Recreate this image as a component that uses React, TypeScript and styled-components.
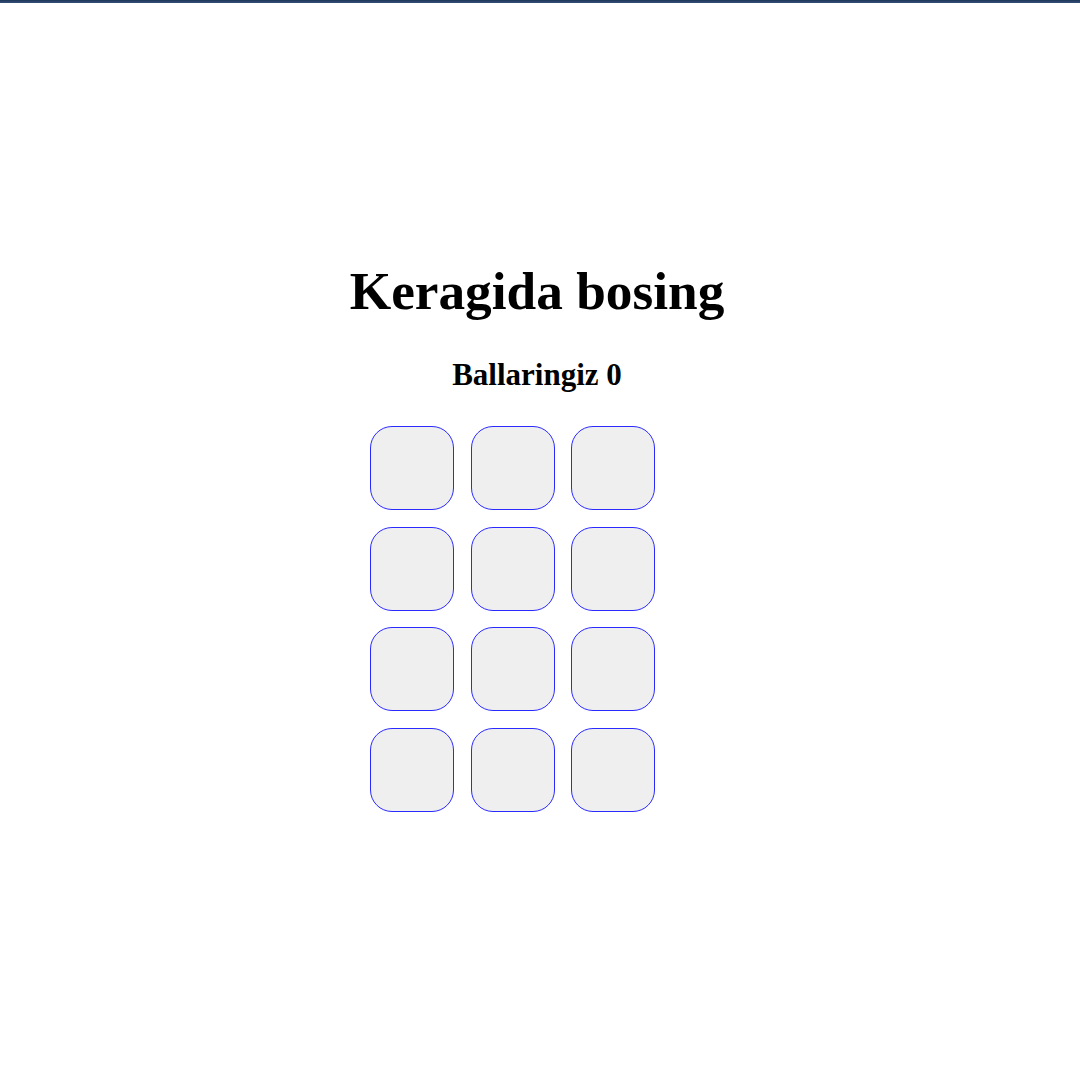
import React from "react";
import styled, { createGlobalStyle } from "styled-components";

const Global = createGlobalStyle`
  html, body { margin: 0; padding: 0; background: #ffffff; }
  body { font-family: "Liberation Serif", "Times New Roman", serif; color: #000; }
`;

const TopBar = styled.div`
  height: 3px;
  background: linear-gradient(#1d3557, #34507a);
`;

const Main = styled.main`
  display: flex;
  flex-direction: column;
  align-items: center;
  padding-top: 259px;
  padding-right: 6px;
`;

const Title = styled.h1`
  margin: 0;
  font-size: 53.3px;
  line-height: 60px;
  font-weight: 700;
`;

const Score = styled.h2`
  margin: 35px 0 0;
  font-size: 31px;
  line-height: 36px;
  font-weight: 700;
`;

const Board = styled.div`
  width: 340px;
  margin: 33px 0 0 6px;
  display: grid;
  grid-template-columns: repeat(3, 84px);
  gap: 16.5px;
`;

const Cell = styled.button`
  width: 84px;
  height: 84px;
  box-sizing: border-box;
  border: 1.5px solid #2a2aff;
  border-radius: 22px;
  background: #efefef;
  padding: 0;
  cursor: pointer;
`;

export default function App() {
  return (
    <>
      <Global />
      <TopBar />
      <Main>
        <Title>Keragida bosing</Title>
        <Score>Ballaringiz 0</Score>
        <Board>
          {Array.from({ length: 12 }).map((_, i) => (
            <Cell key={i} aria-label={`cell ${i + 1}`} />
          ))}
        </Board>
      </Main>
    </>
  );
}
